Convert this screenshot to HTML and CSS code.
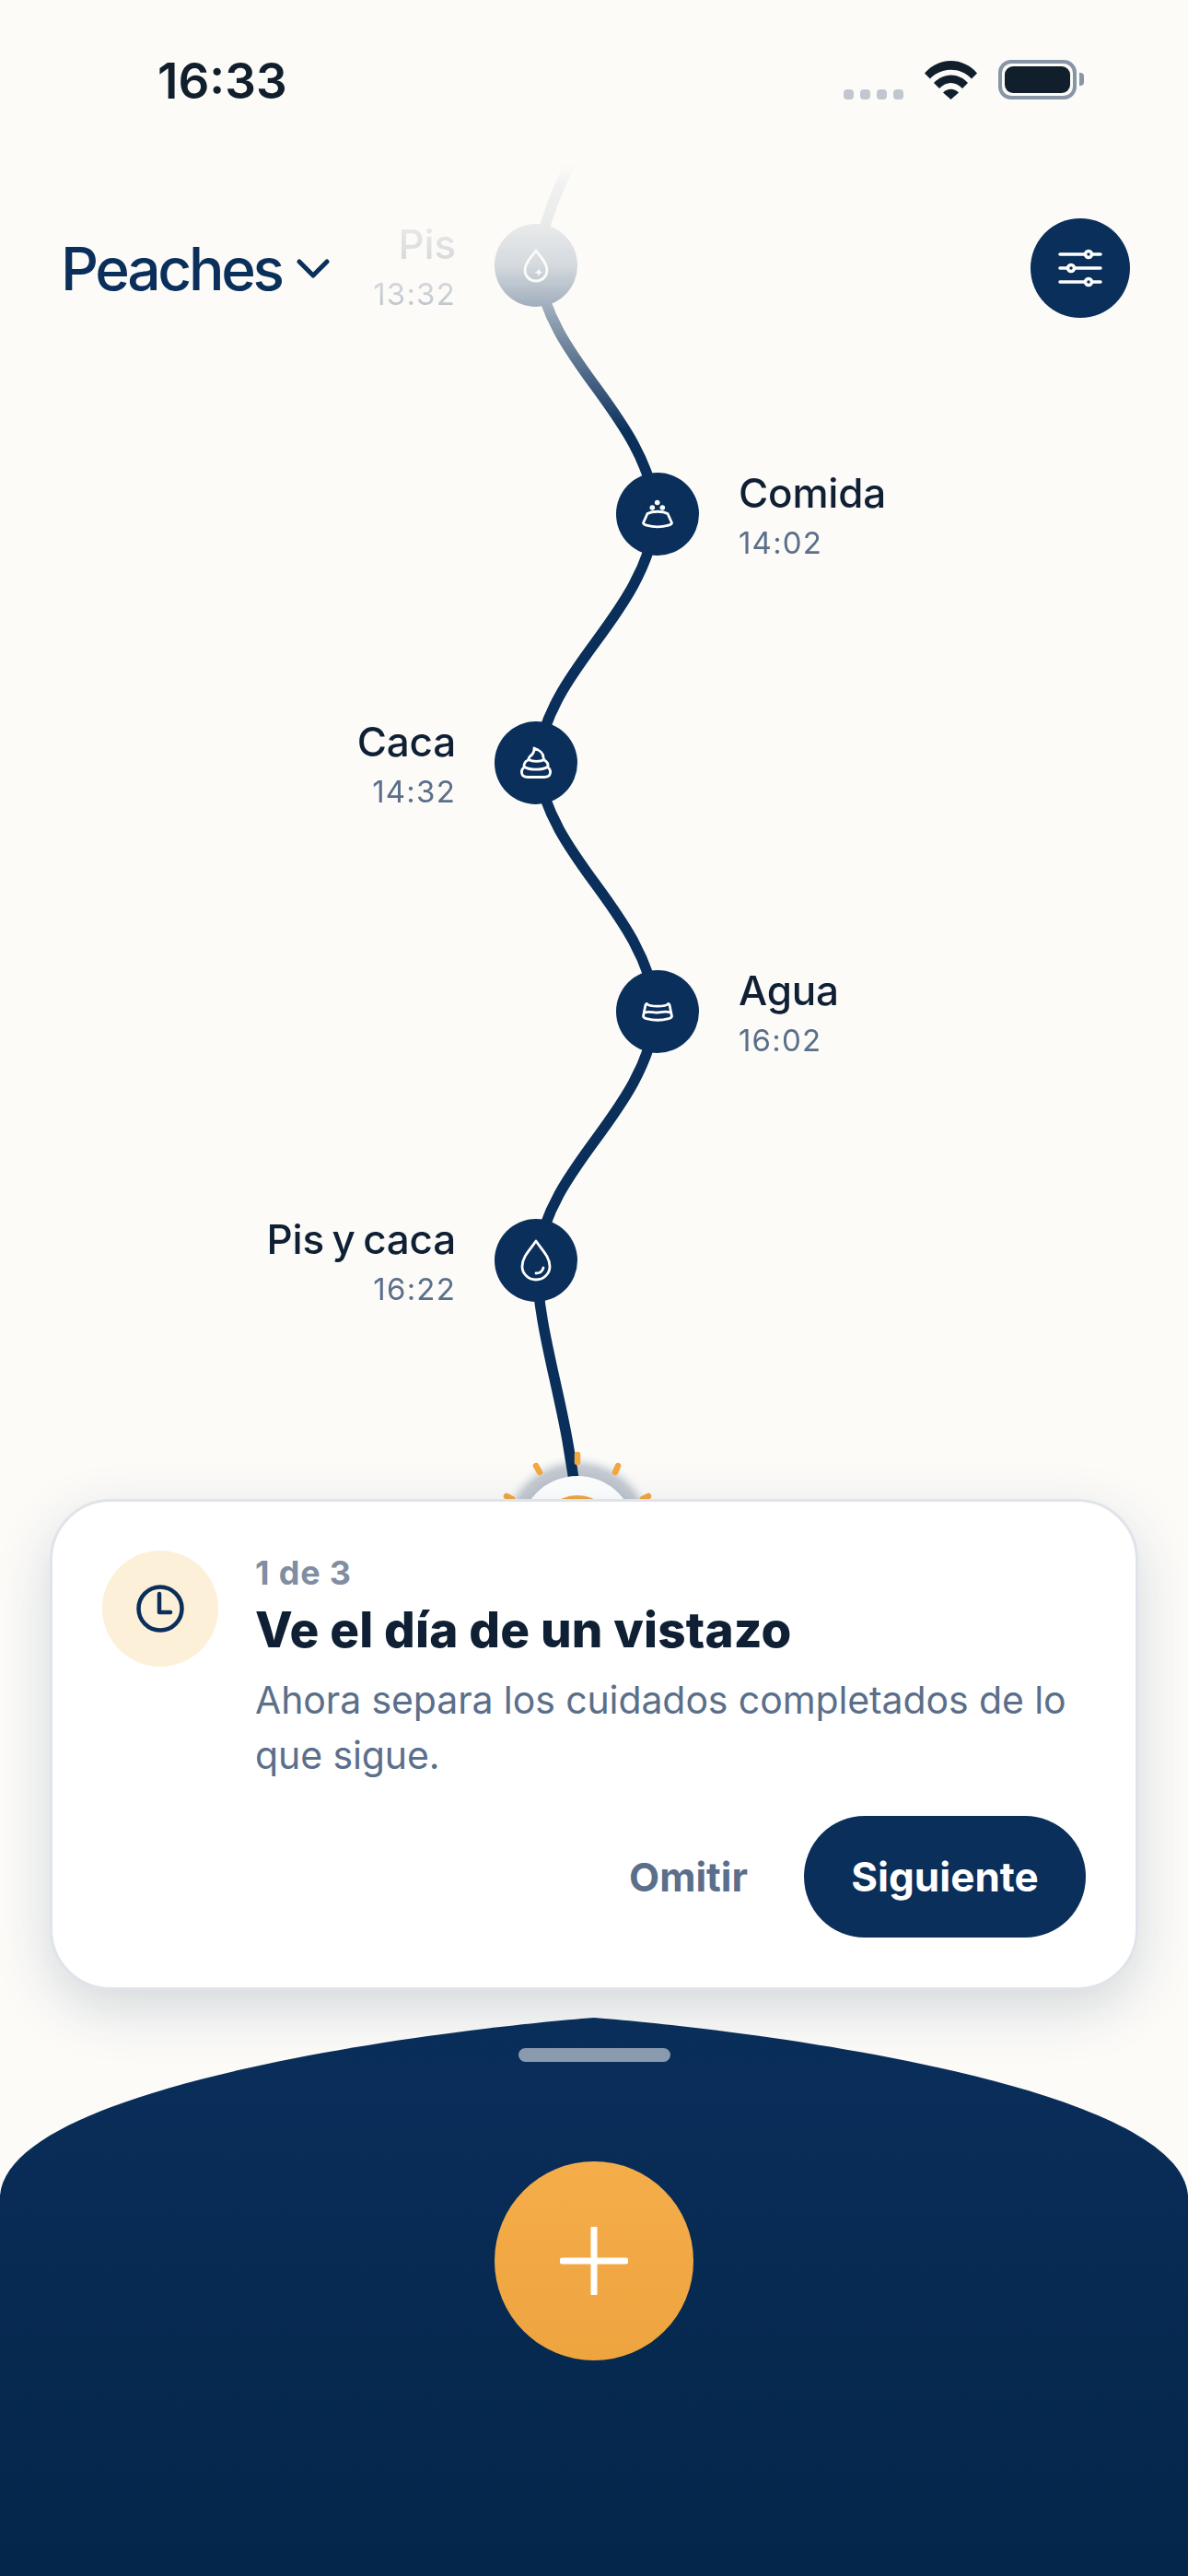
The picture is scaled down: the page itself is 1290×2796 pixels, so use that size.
FILE: index.html
```html
<!DOCTYPE html>
<html lang="es">
<head>
  <meta charset="UTF-8" />
  <meta name="viewport" content="width=device-width, initial-scale=1.0"/>
  <title>Peaches</title>
  <link rel="stylesheet" href="styles.css">
</head>
<body>
  <div class="screen">
    <div class="status-bar">
      <span class="clock">16:33</span>
      <div class="status-icons">
        <div class="signal"><i></i><i></i><i></i><i></i></div>
        <svg class="wifi" viewBox="0 0 57 42">
          <path d="M0 13.500C15 -4.500 42 -4.500 57 13.500L51 19.500C39 6.500 18 6.500 6 19.500Z"/>
          <path d="M10 24C20 12.500 37 12.500 47 24L41 30C33.500 22 23.500 22 16 30Z"/>
          <path d="M20 34.500C25 29.500 32 29.500 37 34.500L28.500 42Z"/>
        </svg>
        <div class="battery"><span class="battery-level"></span></div>
        <span class="battery-nub"></span>
      </div>
    </div>

    <header class="top-bar">
      <div class="pet-picker">
        <span class="pet-name">Peaches</span>
        <svg class="chevron" viewBox="0 0 36 22"><path d="M3 3L18 18L33 3"/></svg>
      </div>
      <button class="filter-btn">
        <svg viewBox="0 0 48 36">
          <path d="M2 3H46M2 18H46M2 33H46"/>
          <circle cx="33" cy="3" r="3.500"/>
          <circle cx="14" cy="18" r="3.500"/>
          <circle cx="33" cy="33" r="3.500"/>
        </svg>
      </button>
    </header>

    <!-- day line, sits behind header and card -->
    <section class="timeline">
      <svg class="trail" viewBox="0 153 1290 1600">
        <defs>
          <radialGradient id="halo">
            <stop offset="0.72" stop-color="#bcc3cc"/>
            <stop offset="0.83" stop-color="#c6ccd3"/>
            <stop offset="0.9" stop-color="#e6e8ea"/>
            <stop offset="1" stop-color="#fcfbf8" stop-opacity="0"/>
          </radialGradient>
        </defs>
        <circle cx="627" cy="1665" r="88" fill="url(#halo)"/>
        <path class="trail-line" d="M622 170C606 205 590 240 582 288C600 400 696 442 714 558C696 676 600 716 582 828C600 940 696 982 714 1098C696 1216 600 1256 582 1368C586 1460 615 1520 627 1640"/>
        <circle cx="627" cy="1665" r="63" fill="#fff"/>
        <circle cx="627" cy="1665" r="42" fill="#f2a73f"/>
        <path class="sun-rays" d="M627 1579V1587M582 1591L586 1598M671 1591L668 1598M550 1624L556 1627M704 1624L698 1627"/>
      </svg>

      <div class="entry entry-left">
        <div class="entry-text"><div class="entry-name">Pis</div><div class="entry-time">13:32</div></div>
        <div class="node">
          <svg class="icon-drop-small" viewBox="0 0 28 37">
            <path d="M14 2C9 9 2 15 2 23.500A12 11.500 0 0 0 26 23.500C26 15 19 9 14 2Z"/>
            <path class="solid" d="M17 21L18.200 24.300L21.500 25.500L18.200 26.700L17 30L15.800 26.700L12.500 25.500L15.800 24.300Z"/>
          </svg>
        </div>
      </div>

      <div class="entry entry-right">
        <div class="node">
          <svg class="icon-bowl" viewBox="0 0 34 30">
            <circle class="solid" cx="16.700" cy="2.500" r="2.800"/>
            <circle class="solid" cx="11.300" cy="8" r="2.800"/>
            <circle class="solid" cx="22.300" cy="8" r="2.800"/>
            <path d="M6 14.500C12 11.500 22 11.500 28 14.500L32.500 24.500C32.500 26 31 26.500 29 27.200C22 29.200 12 29.200 5 27.200C3 26.500 1.500 26 1.500 24.500Z"/>
          </svg>
        </div>
        <div class="entry-text"><div class="entry-name">Comida</div><div class="entry-time">14:02</div></div>
      </div>

      <div class="entry entry-left">
        <div class="entry-text"><div class="entry-name">Caca</div><div class="entry-time">14:32</div></div>
        <div class="node">
          <svg class="icon-poop" viewBox="0 0 32 34">
            <path d="M14 1C20 3 24 7 24 11C24 12.500 24.500 13.500 25 14C28 15.500 29.500 18 29 22C31 23.500 32 25.500 31.500 28C31 31 28 32.500 25 32.500H7C4 32.500 1 31 .5 28C0 25.500 1 23.500 3 22C2.500 18 4 15.500 7.500 14C8 13 8 12 9 10.500C11 8.500 14.500 7 14 1Z"/>
            <path d="M8 13.500C12 16 21 16 25 13.500M3.500 21.500C9 25 23 25 28.500 21.500"/>
          </svg>
        </div>
      </div>

      <div class="entry entry-right">
        <div class="node">
          <svg class="icon-water" viewBox="0 0 34 20">
            <path d="M5.500 1.500C4.500 1.500 4 2.500 3.700 4L1.500 15C1.500 16.500 3 17 5 17.700C13 19.800 21 19.800 29 17.700C31 17 32.500 16.500 32.500 15L30.300 4C30 2.500 29.500 1.500 28.500 1.500C26 5 8 5 5.500 1.500Z"/>
            <path d="M3 11C8 9 12 11.500 17 11C22 10.500 26 9 31 11"/>
          </svg>
        </div>
        <div class="entry-text"><div class="entry-name">Agua</div><div class="entry-time">16:02</div></div>
      </div>

      <div class="entry entry-left">
        <div class="entry-text"><div class="entry-name">Pis y caca</div><div class="entry-time">16:22</div></div>
        <div class="node">
          <svg class="icon-drop" viewBox="0 0 34 46">
            <path d="M17 2C11 11 2 19 2 29.500A15 14.500 0 0 0 32 29.500C32 19 23 11 17 2Z"/>
            <path d="M17 37C21 37 24 35 25 31"/>
          </svg>
        </div>
      </div>
    </section>

    <div class="tip-card">
      <div class="tip-icon">
        <svg viewBox="0 0 52 52">
          <circle cx="26" cy="26" r="23.500"/>
          <path d="M25 10V30H37"/>
        </svg>
      </div>
      <div class="tip-body">
        <div class="tip-step">1 de 3</div>
        <h2 class="tip-title">Ve el día de un vistazo</h2>
        <p class="tip-text">Ahora separa los cuidados completados de lo que sigue.</p>
        <div class="tip-actions">
          <button class="skip-btn">Omitir</button>
          <button class="next-btn">Siguiente</button>
        </div>
      </div>
    </div>

    <footer class="sheet">
      <div class="sheet-handle"></div>
      <button class="add-btn">
        <svg viewBox="0 0 74 74"><path d="M37 2V72M3 37H71"/></svg>
      </button>
    </footer>
  </div>
</body>
</html>
```

FILE: styles.css
```css
* {
  margin: 0;
  padding: 0;
  box-sizing: border-box;
}

body {
  font-family: 'Inter', 'Liberation Sans', sans-serif;
  background-color: #fcfbf8;
  color: #0f2035;
}

button {
  font-family: inherit;
  border: none;
  background: none;
}

.screen {
  position: relative;
  width: 1290px;
  height: 2796px;
  display: flex;
  flex-direction: column;
  overflow: hidden;
}

/* status bar */
.status-bar {
  height: 237px;
  padding: 65px 113px 0 171px;
  display: flex;
  justify-content: space-between;
  align-items: flex-start;
}

.clock {
  font-size: 53px;
  line-height: 46px;
  font-weight: 600;
  color: #111e2c;
}

.status-icons {
  display: flex;
  align-items: flex-end;
}

.signal {
  display: flex;
  gap: 7px;
  margin-right: 23px;
}

.signal i {
  width: 11px;
  height: 11px;
  border-radius: 4px;
  background-color: #c1c6cf;
}

.wifi {
  width: 57px;
  height: 42px;
  margin-right: 23px;
  fill: #111e2c;
}

.battery {
  width: 85px;
  height: 43px;
  padding: 3px;
  border: 4px solid #8795a6;
  border-radius: 14px;
}

.battery-level {
  display: block;
  height: 100%;
  border-radius: 9px;
  background-color: #111e2c;
}

.battery-nub {
  width: 5px;
  height: 14px;
  margin: 0 0 15px 3px;
  border-radius: 0 4px 4px 0;
  background-color: #8795a6;
}

/* header */
.top-bar {
  position: relative;
  z-index: 2;
  height: 108px;
  padding: 0 63px 0 66px;
  display: flex;
  justify-content: space-between;
  align-items: center;
}

.pet-picker {
  display: flex;
  align-items: center;
  gap: 16px;
}

.pet-name {
  font-size: 64px;
  font-weight: 500;
  letter-spacing: -3.3px;
  color: #0a2f5b;
}

.chevron {
  width: 36px;
  height: 22px;
  margin-top: 2px;
  fill: none;
  stroke: #0a2f5b;
  stroke-width: 5;
  stroke-linecap: round;
  stroke-linejoin: round;
}

.filter-btn {
  width: 108px;
  height: 108px;
  border-radius: 50%;
  background-color: #0a2f5b;
  display: flex;
  justify-content: center;
  align-items: center;
}

.filter-btn svg {
  width: 48px;
  height: 36px;
  overflow: visible;
  fill: #0a2f5b;
  stroke: #fff;
  stroke-width: 3.5;
  stroke-linecap: round;
}

/* timeline */
.timeline {
  position: absolute;
  top: 153px;
  left: 0;
  width: 1290px;
  height: 1600px;
  -webkit-mask-image: linear-gradient(to bottom, rgba(0,0,0,0) 25px, rgba(0,0,0,.05) 50px, rgba(0,0,0,.08) 90px, rgba(0,0,0,.16) 135px, rgba(0,0,0,.38) 180px, rgba(0,0,0,.6) 227px, rgba(0,0,0,.78) 267px, #000 317px);
  mask-image: linear-gradient(to bottom, rgba(0,0,0,0) 25px, rgba(0,0,0,.05) 50px, rgba(0,0,0,.08) 90px, rgba(0,0,0,.16) 135px, rgba(0,0,0,.38) 180px, rgba(0,0,0,.6) 227px, rgba(0,0,0,.78) 267px, #000 317px);
}

.trail {
  position: absolute;
  top: 0;
  left: 0;
  width: 1290px;
  height: 1600px;
}

.trail-line {
  fill: none;
  stroke: #0a2f5b;
  stroke-width: 11.5;
}

.sun-rays {
  fill: none;
  stroke: #f2a73f;
  stroke-width: 6.5;
  stroke-linecap: round;
}

.entry {
  position: relative;
  height: 270px;
  display: grid;
  grid-template-columns: 495px 42px 90px 42px 90px 43px 1fr;
  align-items: center;
}

.entry-left .entry-text {
  grid-column: 1;
  text-align: right;
}

.entry-left .node {
  grid-column: 3;
}

.entry-right .node {
  grid-column: 5;
}

.entry-right .entry-text {
  grid-column: 7;
}

.entry-name {
  font-size: 44px;
  line-height: 61px;
  font-weight: 500;
  letter-spacing: -0.2px;
  word-spacing: -3px;
  color: #0f2035;
}

.entry-time {
  font-size: 33px;
  line-height: 46px;
  letter-spacing: 1.2px;
  color: #5b6f8a;
}

.node {
  width: 90px;
  height: 90px;
  border-radius: 50%;
  background-color: #0a2f5b;
  display: flex;
  justify-content: center;
  align-items: center;
}

.node svg {
  overflow: visible;
  fill: none;
  stroke: #fff;
  stroke-width: 2.8;
  stroke-linecap: round;
  stroke-linejoin: round;
}

.node svg .solid {
  fill: #fff;
  stroke: none;
}

.icon-drop-small { width: 28px; height: 37px; }
.icon-bowl { width: 34px; height: 30px; }
.icon-poop { width: 32px; height: 34px; }
.icon-water { width: 34px; height: 20px; }
.icon-drop { width: 34px; height: 46px; }

/* tip card */
.tip-card {
  position: relative;
  z-index: 3;
  margin: auto 54px 30px;
  height: 533px;
  padding: 53px 54px 0;
  display: flex;
  gap: 40px;
  background-color: #fff;
  border: 3px solid #e0e4ea;
  border-radius: 66px;
  box-shadow: 0 20px 60px rgba(10, 47, 91, 0.17);
}

.tip-icon {
  flex: none;
  width: 126px;
  height: 126px;
  border-radius: 50%;
  background-color: #fdf0d9;
  display: flex;
  justify-content: center;
  align-items: center;
}

.tip-icon svg {
  width: 52px;
  height: 52px;
  fill: none;
  stroke: #0a2f5b;
  stroke-width: 4.5;
  stroke-linecap: round;
  stroke-linejoin: round;
}

.tip-body {
  flex: 1;
}

.tip-step {
  font-size: 36px;
  line-height: 49px;
  font-weight: 700;
  letter-spacing: 0.8px;
  color: #7f8ea2;
}

.tip-title {
  margin-top: 6px;
  font-size: 53px;
  line-height: 62px;
  font-weight: 800;
  letter-spacing: 0.15px;
  color: #0f2035;
}

.tip-text {
  margin-top: 15px;
  font-size: 41px;
  line-height: 60px;
  letter-spacing: -0.1px;
  color: #5b6f8a;
}

.tip-actions {
  margin-top: 36px;
  display: flex;
  justify-content: flex-end;
  align-items: center;
  gap: 61px;
}

.skip-btn {
  font-size: 43px;
  font-weight: 700;
  color: #5b6f8a;
}

.next-btn {
  width: 306px;
  height: 132px;
  border-radius: 66px;
  background-color: #0a2f5b;
  font-size: 44px;
  font-weight: 700;
  color: #fff;
}

/* bottom sheet */
.sheet {
  flex: none;
  height: 606px;
  padding-top: 33px;
  display: flex;
  flex-direction: column;
  align-items: center;
  background: linear-gradient(to bottom, #0a2f5b, #072a52 50%, #04264a);
  clip-path: path('M0 193C10 70 490 12 645 0C800 12 1280 70 1290 193V606H0Z');
}

.sheet-handle {
  width: 165px;
  height: 15px;
  border-radius: 8px;
  background-color: #8b9bb0;
}

.add-btn {
  width: 216px;
  height: 216px;
  margin-top: 108px;
  border-radius: 50%;
  background: linear-gradient(to bottom, #f5ad4a, #eea43f);
  display: flex;
  justify-content: center;
  align-items: center;
}

.add-btn svg {
  width: 74px;
  height: 74px;
  fill: none;
  stroke: #fff;
  stroke-width: 7;
  stroke-linecap: round;
}
```
